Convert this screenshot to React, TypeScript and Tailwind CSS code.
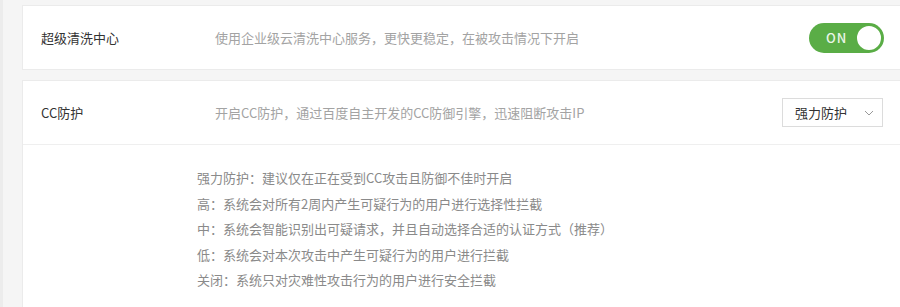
import React from "react";

const font = "font-['Noto_Sans_CJK_SC','Noto_Sans',sans-serif]";

export default function App() {
  return (
    <div className={`w-[900px] h-[307px] overflow-hidden bg-[#f5f5f5] flex ${font}`}>
      <div className="w-[3px] bg-[#ececec] shrink-0" />
      <div className="flex-1 pl-[19px] pt-[5px] flex flex-col gap-[10px]">
        {/* Card 1 */}
        <div className="bg-white border border-r-0 border-[#ebebeb] h-[65px] flex items-center pl-[18px] pr-[16px]">
          <div className="w-[174px] text-[13px] text-[#333]">超级清洗中心</div>
          <div className="flex-1 text-[13px] text-[#a3a3a3]">
            使用企业级云清洗中心服务，更快更稳定，在被攻击情况下开启
          </div>
          <div className="w-[75px] h-[30px] rounded-full bg-[#5aad46] flex items-center justify-between pl-[17px] pr-[1px]">
            <span className="text-[13px] text-[#eaf5e6] tracking-[1px] font-medium">ON</span>
            <span className="w-[28px] h-[28px] rounded-full bg-white border-2 border-[#5aad46]" />
          </div>
        </div>
        {/* Card 2 */}
        <div className="bg-white border border-r-0 border-b-0 border-[#ebebeb] flex-1 flex flex-col">
          <div className="h-[64px] flex items-center pl-[18px] pr-[17px] border-b border-[#efefef]">
            <div className="w-[174px] text-[13px] text-[#333]">CC防护</div>
            <div className="flex-1 text-[13px] text-[#a3a3a3]">
              开启CC防护，通过百度自主开发的CC防御引擎，迅速阻断攻击IP
            </div>
            <div className="w-[101px] h-[29px] border border-[#dcdcdc] flex items-center justify-between pl-[12px] pr-[8px]">
              <span className="text-[13px] text-[#333]">强力防护</span>
              <svg width="10" height="6" viewBox="0 0 10 6" fill="none">
                <path d="M1 1l4 4 4-4" stroke="#999" strokeWidth="1" />
              </svg>
            </div>
          </div>
          <div className="pl-[174px] pt-[20px] text-[13px] text-[#8a8a8a] leading-[25.5px] flex flex-col">
            <div>强力防护：建议仅在正在受到CC攻击且防御不佳时开启</div>
            <div>高：系统会对所有2周内产生可疑行为的用户进行选择性拦截</div>
            <div>中：系统会智能识别出可疑请求，并且自动选择合适的认证方式（推荐）</div>
            <div>低：系统会对本次攻击中产生可疑行为的用户进行拦截</div>
            <div>关闭：系统只对灾难性攻击行为的用户进行安全拦截</div>
          </div>
        </div>
      </div>
    </div>
  );
}
